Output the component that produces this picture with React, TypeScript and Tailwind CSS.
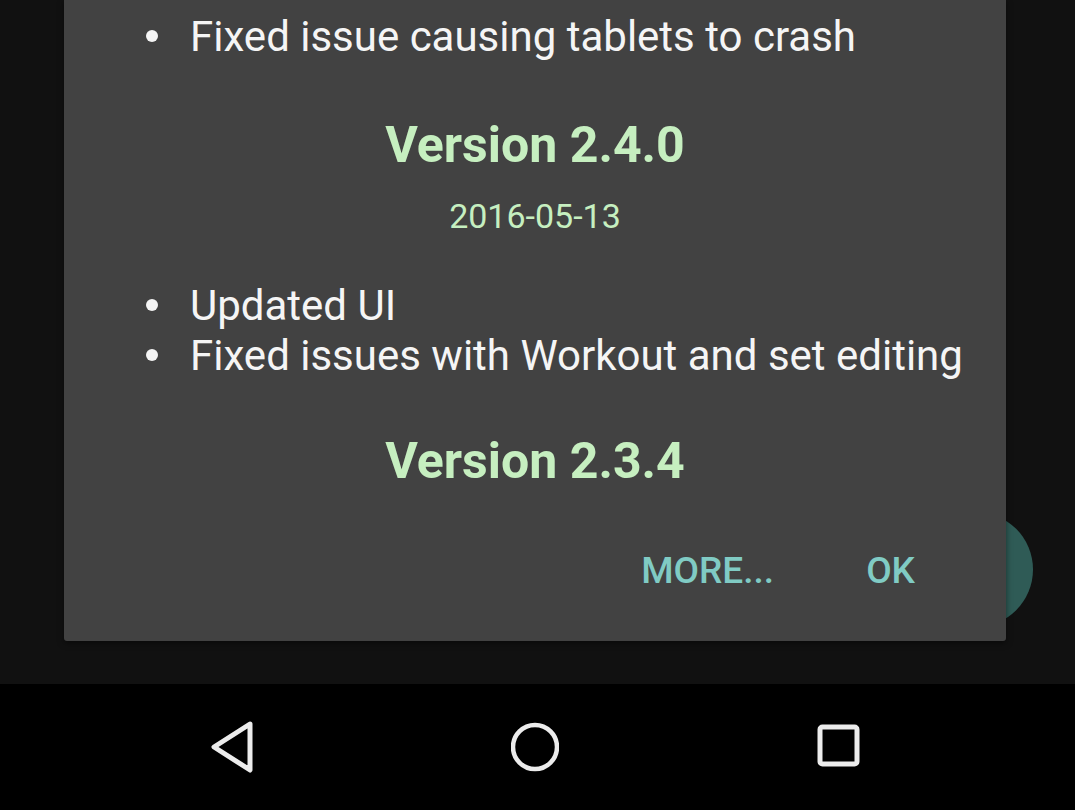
import React from 'react';

const ChangeItem: React.FC<{ text: string }> = ({ text }) => (
    <div className="flex items-center h-[50px] pl-[82px]">
        <span className="w-[12px] h-[12px] rounded-full bg-[#f5f5f5] mt-[-2px]" />
        <span className="ml-[32px] text-[42px] leading-[50px] text-[#f5f5f5] whitespace-nowrap">{text}</span>
    </div>
);

const App: React.FC = () => {
    return (
        <div
            className="w-[1075px] h-[810px] bg-[#111111] flex flex-col overflow-hidden"
            style={{ fontFamily: 'Roboto, "Noto Sans", sans-serif' }}
        >
            <div className="relative h-[684px]">
                {/* FAB peeking out from behind the dialog */}
                <div className="absolute left-[918px] top-[512px] w-[115px] h-[115px] rounded-full bg-[#2f5b56]" />

                {/* Changelog dialog */}
                <div className="relative ml-[64px] w-[942px] h-[641px] bg-[#424242] rounded-b-[3px] flex flex-col shadow-[0_2px_6px_rgba(0,0,0,0.5)]">
                    <div className="pt-[12px]">
                        <ChangeItem text="Fixed issue causing tablets to crash" />
                    </div>

                    <h2 className="mt-[53px] text-center text-[50px] leading-[60px] font-bold text-[#c6efc0]">Version 2.4.0</h2>
                    <p className="mt-[21px] text-center text-[34px] leading-[40px] text-[#c6efc0]">2016-05-13</p>

                    <div className="mt-[45px]">
                        <ChangeItem text="Updated UI" />
                        <ChangeItem text="Fixed issues with Workout and set editing" />
                    </div>

                    <h2 className="mt-[50px] text-center text-[50px] leading-[60px] font-bold text-[#c6efc0]">Version 2.3.4</h2>

                    {/* Dialog buttons */}
                    <div className="mt-auto mb-[50px] flex justify-end items-center gap-[92px] pr-[91px]">
                        <button className="text-[37px] leading-[40px] font-medium text-[#80cbc4]">MORE...</button>
                        <button className="text-[37px] leading-[40px] font-medium text-[#80cbc4]">OK</button>
                    </div>
                </div>
            </div>

            {/* Navigation bar */}
            <div className="h-[126px] bg-black flex items-center justify-center gap-[255px] pr-[6px]">
                <svg width="48" height="54" viewBox="0 0 48 54">
                    <path d="M42 4 L6 27 L42 50 Z" fill="none" stroke="#ececec" strokeWidth="5" strokeLinejoin="round" />
                </svg>
                <svg width="48" height="54" viewBox="0 0 48 54">
                    <circle cx="24" cy="27" r="22" fill="none" stroke="#ececec" strokeWidth="4.5" />
                </svg>
                <svg width="48" height="54" viewBox="0 0 48 54">
                    <rect x="6" y="7" width="37" height="37" rx="2.5" fill="none" stroke="#ececec" strokeWidth="5" />
                </svg>
            </div>
        </div>
    );
};

export default App;
